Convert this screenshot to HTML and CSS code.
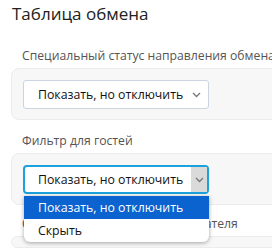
FILE: index.html
```html
<!DOCTYPE html>
<html>

<head>
    <meta charset="utf-8">
    <link rel="stylesheet" href="styles.css">
</head>

<body>
    <h1 class="title">Таблица обмена</h1>

    <div class="field first">
        <div class="label">Специальный статус направления обмена</div>
        <div class="card">
            <div class="select">
                <span class="value">Показать, но отключить</span>
                <span class="arrow">
                    <svg width="9" height="6" viewBox="0 0 9 6"><path d="M1 1l3.5 3.5L8 1" fill="none" stroke="#777" stroke-width="1.3"/></svg>
                </span>
            </div>
        </div>
    </div>

    <div class="field">
        <div class="label">Фильтр для гостей</div>
        <div class="card">
            <div class="select-wrap">
                <div class="select open">
                    <span class="value">Показать, но отключить</span>
                    <span class="arrow">
                        <svg width="9" height="6" viewBox="0 0 9 6"><path d="M1 1l3.5 3.5L8 1" fill="none" stroke="#777" stroke-width="1.3"/></svg>
                    </span>
                </div>
                <ul class="dropdown">
                    <li class="active">Показать, но отключить</li>
                    <li>Скрыть</li>
                </ul>
            </div>
        </div>
    </div>

    <div class="field last">
        <div class="label">Статус направления для получателя</div>
        <div class="card short"></div>
    </div>
</body>

</html>
```

FILE: styles.css
```css
body {
    margin: 0;
    width: 272px;
    height: 250px;
    overflow: hidden;
    background: #fff;
    font-family: "Open Sans", sans-serif;
    color: #222
}

.title {
    margin: 0;
    padding-left: 12px;
    font-size: 17px;
    font-weight: normal;
    line-height: 28px;
    color: #222
}

.field {
    margin-top: 12px
}

.field.first {
    margin-top: 19px
}

.field.last {
    margin-top: 10px
}

.label {
    padding-left: 22px;
    font-size: 12.2px;
    line-height: 17px;
    color: #555;
    white-space: nowrap;
    margin-bottom: 4px
}

.card {
    margin-left: 11px;
    width: 300px;
    height: 52px;
    padding: 11px 0 0 11px;
    box-sizing: border-box;
    background: #f7f7f7;
    border: 1px solid #ececec;
    border-radius: 8px
}

.card.short {
    height: 12px;
    padding: 0
}

.select-wrap {
    position: relative;
    width: 186px
}

.select {
    display: flex;
    align-items: center;
    width: 186px;
    height: 29px;
    box-sizing: border-box;
    background: #fff;
    border: 1px solid #c9d6e2;
    border-radius: 3px;
    font-size: 12.3px;
    color: #111
}

.value {
    flex: 1;
    padding-left: 14px;
    white-space: nowrap
}

.arrow {
    display: flex;
    align-items: center;
    justify-content: center;
    width: 17px;
    height: 100%;
    margin-right: 3px
}

.select.open {
    border: 2px solid #1ba1dc;
    border-radius: 4px
}

.select.open .value {
    padding-left: 13px
}

.select.open .arrow {
    background: #dadada;
    margin-right: 0;
    width: 16px
}

.dropdown {
    position: absolute;
    top: 31px;
    left: 1px;
    right: 0;
    margin: 0;
    padding: 0;
    list-style: none;
    background: #fff;
    border-radius: 0 0 6px 6px;
    box-shadow: 0 1px 4px rgba(0, 0, 0, 0.35);
    overflow: hidden;
    font-size: 12.3px;
    z-index: 2
}

.dropdown li {
    height: 23px;
    line-height: 23px;
    padding-left: 14px;
    color: #111
}

.dropdown li.active {
    background: #0b63cf;
    color: #fff
}
```
